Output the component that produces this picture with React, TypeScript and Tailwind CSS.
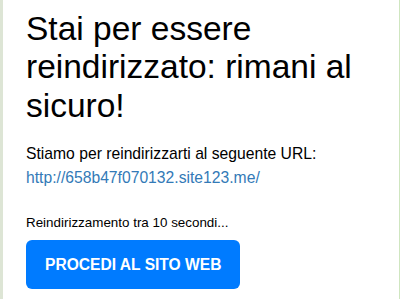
const App = () => {
  return (
    <div className="min-h-[299px] bg-white border-l-[3px] border-r border-l-[#dde5d5] border-r-[#cfe6c0] font-['Liberation_Sans',Arial,sans-serif]">
      <div className="pl-[23px] pr-4 pt-[10px]">
        <h1 className="text-[33.5px] leading-[38.4px] text-black font-normal">
          Stai per essere reindirizzato: rimani al sicuro!
        </h1>
        <p className="mt-[17px] text-[15.7px] leading-6 text-black">
          Stiamo per reindirizzarti al seguente URL:
        </p>
        <a href="#" className="block text-[15.7px] leading-6 text-[#337ab7]">
          http://658b47f070132.site123.me/
        </a>
        <p className="mt-[22px] text-[13.4px] leading-[21px] text-black">
          Reindirizzamento tra 10 secondi...
        </p>
        <button className="mt-[7px] h-[49px] px-[19px] rounded-md bg-[#007bff] text-white font-bold text-[15.6px] uppercase">
          Procedi al sito web
        </button>
      </div>
    </div>
  );
};

export default App;
